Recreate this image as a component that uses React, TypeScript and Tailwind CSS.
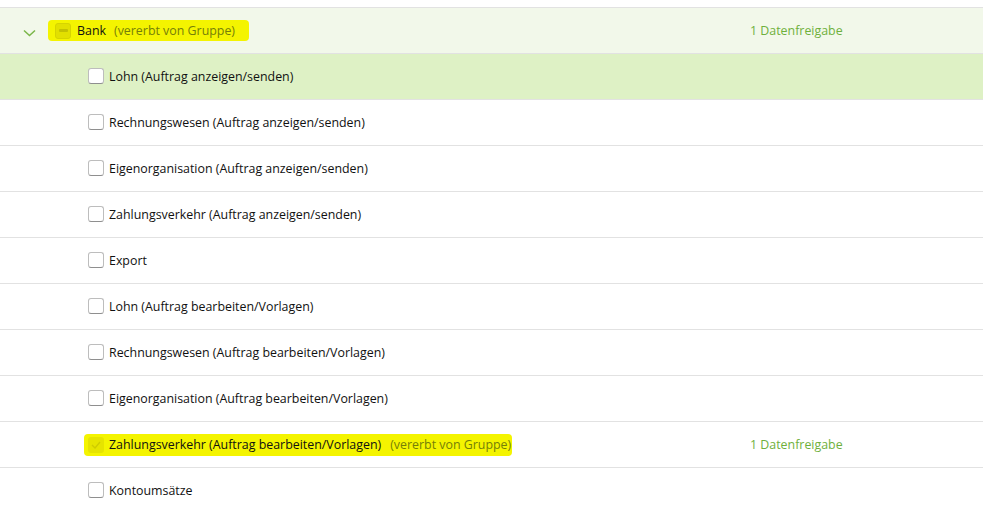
const rows = [
  { label: "Lohn (Auftrag anzeigen/senden)", active: true },
  { label: "Rechnungswesen (Auftrag anzeigen/senden)" },
  { label: "Eigenorganisation (Auftrag anzeigen/senden)" },
  { label: "Zahlungsverkehr (Auftrag anzeigen/senden)" },
  { label: "Export" },
  { label: "Lohn (Auftrag bearbeiten/Vorlagen)" },
  { label: "Rechnungswesen (Auftrag bearbeiten/Vorlagen)" },
  { label: "Eigenorganisation (Auftrag bearbeiten/Vorlagen)" },
  { label: "Zahlungsverkehr (Auftrag bearbeiten/Vorlagen)", inherited: true },
  { label: "Kontoumsätze" },
];

function Box() {
  return (
    <span className="w-4 h-4 rounded-[3px] bg-white border border-[#bdbdbd] border-b-[#8f8f8f] shrink-0" />
  );
}

export default function App() {
  return (
    <div
      className="w-[983px] h-[509px] bg-white overflow-hidden text-[12.4px] text-[#111]"
      style={{ fontFamily: '"Open Sans", "Noto Sans", sans-serif' }}
    >
      <div className="h-[7px]" />
      <div className="border-t border-[#e2e2e2]">
        <div className="h-[46px] bg-[#f2f8ea] flex items-center border-b border-[#e2e2e2]">
          <svg className="ml-[23px] w-[13px] h-[8px] mt-[5px]" viewBox="0 0 13 8" fill="none">
            <path d="M1 1.5 L6.5 6.5 L12 1.5" stroke="#7ab648" strokeWidth="1.5" />
          </svg>
          <div className="ml-[12px] flex items-center gap-[6px] bg-[#f4f400] rounded-[4px] h-[21px] pl-[7px] pr-[14px] whitespace-nowrap">
            <span className="w-4 h-4 rounded-[3px] bg-[#e2e000] border border-[#d6d400] flex items-center justify-center">
              <span className="w-[9px] h-[3px] bg-[#c4c200] rounded-[1px]" />
            </span>
            <span className="pt-[1px]">Bank</span>
            <span className="ml-[2px] pt-[1px] text-[#757f08]">(vererbt von Gruppe)</span>
          </div>
          <span className="ml-[501px] pt-[2px] text-[#6fb03c] whitespace-nowrap">1 Datenfreigabe</span>
        </div>
        {rows.map((r) => (
          <div
            key={r.label}
            className={`h-[46px] flex items-center border-b border-[#e2e2e2] ${r.active ? "bg-[#def1c5]" : "bg-white"}`}
          >
            {r.inherited ? (
              <>
                <div className="ml-[84px] w-[428px] flex items-center gap-[5px] bg-[#f4f400] rounded-[4px] h-[22px] pl-[4px] whitespace-nowrap">
                  <span className="w-4 h-4 rounded-[3px] bg-[#e6e400] flex items-center justify-center">
                    <svg viewBox="0 0 10 8" className="w-[10px] h-[8px]" fill="none">
                      <path d="M1 4 L4 7 L9 1" stroke="#cfcc00" strokeWidth="1.4" />
                    </svg>
                  </span>
                  <span className="pt-[2px]">Zahlungsverkehr (Auftrag bearbeiten/Vorlagen)</span>
                  <span className="ml-[4px] pt-[2px] text-[#757f08]">(vererbt von Gruppe)</span>
                </div>
                <span className="ml-[238px] pt-[2px] text-[#6fb03c] whitespace-nowrap">1 Datenfreigabe</span>
              </>
            ) : (
              <div className="ml-[88px] flex items-center gap-[5px]">
                <Box />
                <span className="pt-[2px]">{r.label}</span>
              </div>
            )}
          </div>
        ))}
      </div>
    </div>
  );
}
